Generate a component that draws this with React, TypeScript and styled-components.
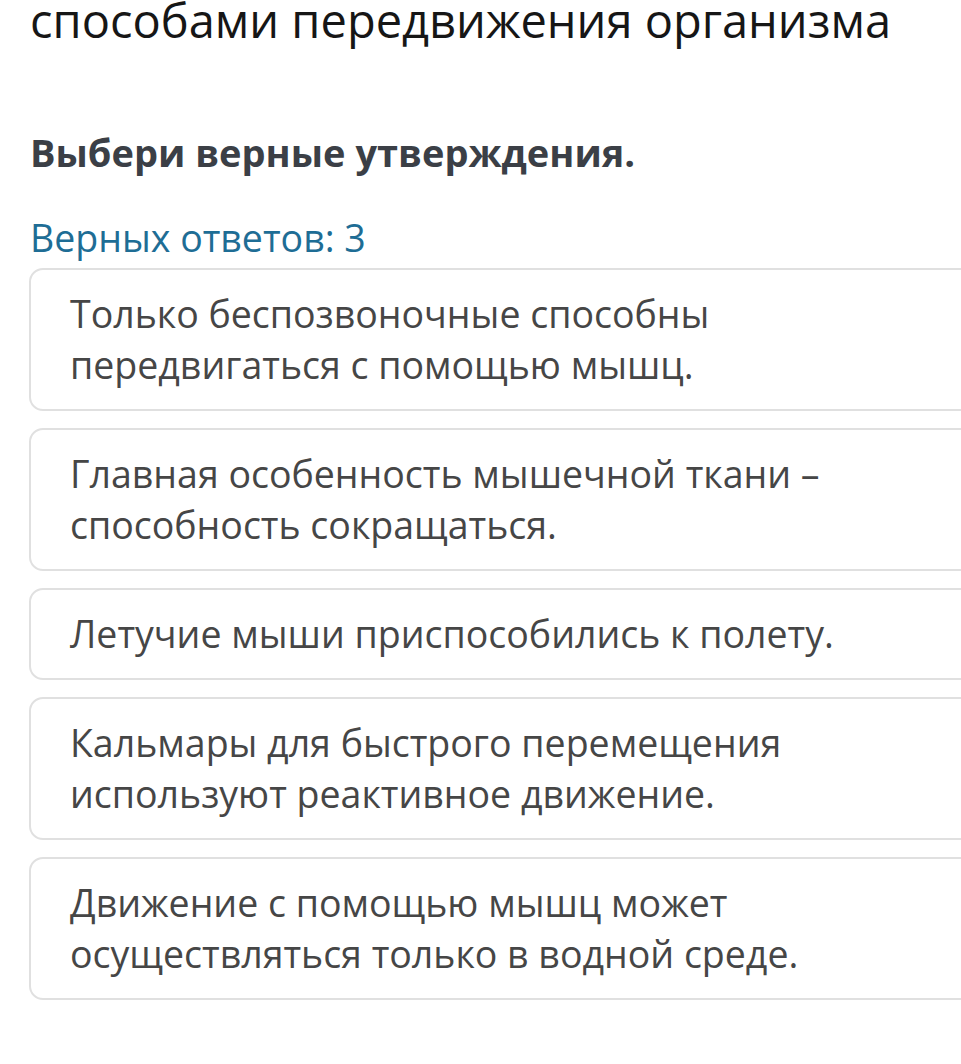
import React from "react";
import styled, { createGlobalStyle } from "styled-components";

const Global = createGlobalStyle`
  html, body { margin: 0; padding: 0; background: #ffffff; overflow-x: hidden; }
  body { font-family: "Open Sans", "Noto Sans", sans-serif; }
`;

const Page = styled.div`
  padding-left: 29px;
  display: flex;
  flex-direction: column;
`;

const Title = styled.h1`
  margin: -12px 0 0 1px;
  font-size: 47px;
  font-weight: 400;
  line-height: normal;
  color: #161616;
  white-space: nowrap;
`;

const Question = styled.div`
  margin: 74px 0 0 1px;
  font-size: 38px;
  font-weight: 700;
  line-height: normal;
  color: #3b3f46;
`;

const Count = styled.div`
  margin: 34px 0 5px 1px;
  font-size: 37.5px;
  font-weight: 400;
  line-height: normal;
  color: #1e6d95;
`;

const List = styled.div`
  display: flex;
  flex-direction: column;
  gap: 17px;
  margin-right: -40px;
`;

const Card = styled.div`
  border: 2px solid #e0e0e0;
  border-radius: 14px;
  background: #ffffff;
  padding: 18px 40px 19px 39px;
  font-size: 37.5px;
  line-height: 51px;
  color: #464646;
`;

const Line = styled.span`
  display: block;
`;

const answers: string[][] = [
  ["Только беспозвоночные способны", "передвигаться с помощью мышц."],
  ["Главная особенность мышечной ткани –", "способность сокращаться."],
  ["Летучие мыши приспособились к полету."],
  ["Кальмары для быстрого перемещения", "используют реактивное движение."],
  ["Движение с помощью мышц может", "осуществляться только в водной среде."],
];

export default function App() {
  return (
    <>
      <Global />
      <Page>
        <Title>способами передвижения организма</Title>
        <Question>Выбери верные утверждения.</Question>
        <Count>Верных ответов: 3</Count>
        <List>
          {answers.map((lines, i) => (
            <Card key={i}>
              {lines.map((l, j) => (
                <Line key={j}>{l}</Line>
              ))}
            </Card>
          ))}
        </List>
      </Page>
    </>
  );
}
